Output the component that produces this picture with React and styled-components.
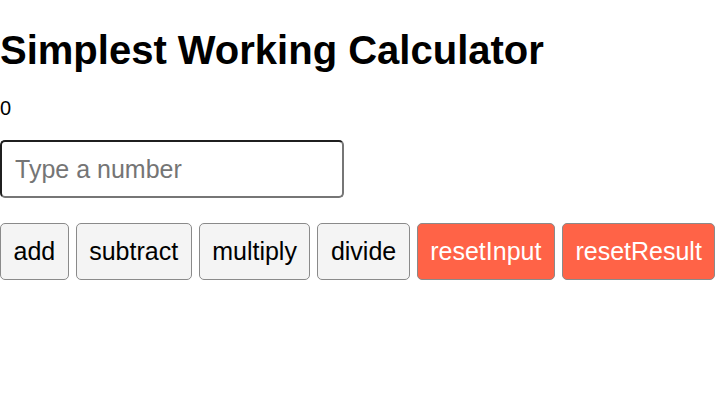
import React, { useState } from "react";
import styled, { createGlobalStyle } from "styled-components";

const GlobalStyle = createGlobalStyle`
  html, body { margin: 0; padding: 0; background: #ffffff; }
  body { font-family: "Liberation Sans", Arial, sans-serif; color: #000; }
`;

const Page = styled.main`
  display: flex;
  flex-direction: column;
  align-items: flex-start;
`;

const Title = styled.h1`
  font-size: 40px;
  font-weight: bold;
  margin: 27px 0 24px;
  line-height: 46px;
`;

const Result = styled.p`
  font-size: 20px;
  line-height: 23px;
  margin: 0 0 20px;
`;

const NumberInput = styled.input`
  box-sizing: border-box;
  width: 344px;
  height: 58px;
  margin: 0 0 25px;
  padding: 0 13px;
  font-family: "Liberation Sans", Arial, sans-serif;
  font-size: 25px;
  border-width: 2px;
  border-style: solid;
  border-color: #1f1f1f #767676 #767676 #1f1f1f;
  border-radius: 5px;
  outline: none;
  &::placeholder { color: #757575; }
`;

const ButtonRow = styled.div`
  display: flex;
  gap: 7px;
`;

const Button = styled.button`
  box-sizing: border-box;
  height: 57px;
  padding: 0 12.5px;
  font-family: "Liberation Sans", Arial, sans-serif;
  font-size: 25px;
  border: 1px solid #8a8a8a;
  border-radius: 5px;
  background: ${(p) => (p.$danger ? "#ff6347" : "#f4f4f4")};
  color: ${(p) => (p.$danger ? "#ffffff" : "#000000")};
  cursor: pointer;
`;

export default function App() {
  const [value, setValue] = useState("");
  const [result, setResult] = useState(0);
  const n = Number(value) || 0;
  return (
    <Page>
      <GlobalStyle />
      <Title>Simplest Working Calculator</Title>
      <Result>{result}</Result>
      <NumberInput
        type="number"
        placeholder="Type a number"
        value={value}
        onChange={(e) => setValue(e.target.value)}
      />
      <ButtonRow>
        <Button onClick={() => setResult(result + n)}>add</Button>
        <Button onClick={() => setResult(result - n)}>subtract</Button>
        <Button onClick={() => setResult(result * n)}>multiply</Button>
        <Button onClick={() => setResult(n ? result / n : result)}>divide</Button>
        <Button $danger onClick={() => setValue("")}>resetInput</Button>
        <Button $danger onClick={() => setResult(0)}>resetResult</Button>
      </ButtonRow>
    </Page>
  );
}
